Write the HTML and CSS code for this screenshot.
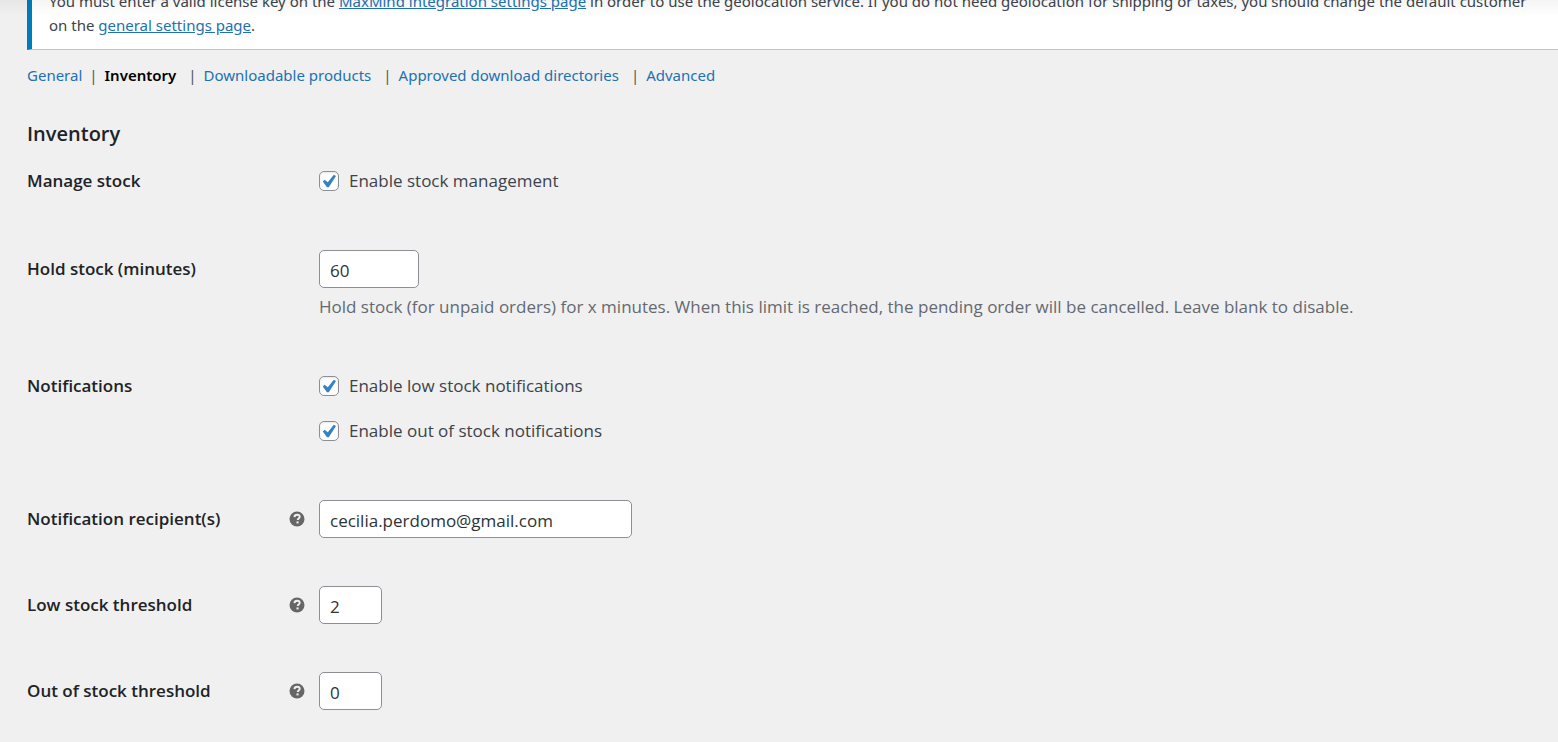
FILE: index.html
```html
<!DOCTYPE html>
<html lang="en">
<head>
<meta charset="utf-8">
<title>Inventory settings</title>
<link rel="stylesheet" href="styles.css">
</head>
<body>
<svg class="sprite" aria-hidden="true">
  <symbol id="help" viewBox="0 0 16 16">
    <circle cx="8" cy="8" r="7.5" fill="#666"/>
    <path d="M5.4 6.1C5.5 4.5 6.5 3.7 8.1 3.7c1.6 0 2.6.8 2.6 2.1 0 1.6-2 1.7-2 3.2" fill="none" stroke="#f0f0f0" stroke-width="1.9"/>
    <rect x="7.5" y="10.4" width="2.1" height="2" fill="#f0f0f0"/>
  </symbol>
</svg>
<div class="top-shade"></div>
<main class="page">
  <div class="notice">
    <p>You must enter a valid license key on the <a href="#">MaxMind integration settings page</a> in order to use the geolocation service. If you do not need geolocation for shipping or taxes, you should change the default customer<br>on the <a href="#">general settings page</a>.</p>
  </div>
  <nav class="sections">
    <a href="#">General</a><span class="bar">|</span><a href="#" class="current">Inventory</a><span class="bar wide">|</span><a href="#">Downloadable products</a><span class="bar wide">|</span><a href="#">Approved download directories</a><span class="bar wide">|</span><a href="#">Advanced</a>
  </nav>
  <h2 class="title">Inventory</h2>
  <form class="settings">
    <div class="row roomy">
      <div class="name">Manage stock</div>
      <div class="field"><label class="option"><input type="checkbox" class="tick" checked>Enable stock management</label></div>
    </div>
    <div class="row">
      <label class="name" for="hold">Hold stock (minutes)</label>
      <div class="field"><input id="hold" class="box medium" type="text" value="60"><p class="description">Hold stock (for unpaid orders) for x minutes. When this limit is reached, the pending order will be cancelled. Leave blank to disable.</p></div>
    </div>
    <div class="row roomy">
      <div class="name">Notifications</div>
      <div class="field options"><label class="option"><input type="checkbox" class="tick" checked>Enable low stock notifications</label><label class="option"><input type="checkbox" class="tick" checked>Enable out of stock notifications</label></div>
    </div>
    <div class="row">
      <label class="name" for="recipient">Notification recipient(s)<svg class="help"><use href="#help"/></svg></label>
      <div class="field"><input id="recipient" class="box long" type="text" value="cecilia.perdomo@gmail.com"></div>
    </div>
    <div class="row">
      <label class="name" for="low">Low stock threshold<svg class="help"><use href="#help"/></svg></label>
      <div class="field"><input id="low" class="box short" type="text" value="2"></div>
    </div>
    <div class="row">
      <label class="name" for="out">Out of stock threshold<svg class="help"><use href="#help"/></svg></label>
      <div class="field"><input id="out" class="box short" type="text" value="0"></div>
    </div>
  </form>
</main>
</body>
</html>
```
FILE: styles.css
```css
* { box-sizing: border-box; }
html { overflow: hidden; }
body {
  margin: 0;
  background: #f0f0f0;
  color: #3c434a;
  font: 17px/24px "Open Sans", "Noto Sans", sans-serif;
}
.sprite { display: none; }
.top-shade {
  position: absolute;
  top: 0;
  left: 0;
  right: 0;
  height: 16px;
  background: linear-gradient(rgba(0, 0, 0, .04), rgba(0, 0, 0, 0));
}
.page { padding-left: 27px; }
a { color: #2271b1; }
.notice {
  margin-top: -24px;
  padding: 12px 0 12px 17px;
  background: #fff;
  border: solid #c3c4c7;
  border-width: 1px 0 1px 5px;
  border-left-color: #007cba;
  font-family: "Noto Sans", sans-serif;
  font-size: 15px;
  white-space: nowrap;
}
.notice p { margin: 0; }
.sections {
  display: flex;
  margin-top: 13px;
  font-family: "Noto Sans", sans-serif;
  font-size: 15px;
}
.sections a { text-decoration: none; }
.sections .current { color: #000; font-weight: 600; }
.bar { margin: 0 7px; color: #50575e; }
.bar.wide { margin-left: 12px; }
.title {
  margin: 35px 0 0;
  color: #1d2327;
  font-size: 20px;
  font-weight: 600;
  line-height: 24px;
}
.settings { margin-top: -8px; }
.row {
  display: grid;
  grid-template-columns: 292px 1fr;
  padding: 24px 0;
}
.row.roomy { padding-bottom: 26px; }
.name {
  display: flex;
  justify-content: space-between;
  align-items: center;
  height: 38px;
  padding-right: 14px;
  color: #1d2327;
  font-weight: 600;
}
.help { width: 16px; height: 16px; }
.option { display: flex; align-items: center; height: 38px; }
.options { display: grid; gap: 7px; }
.tick {
  appearance: none;
  width: 20px;
  height: 20px;
  margin: 0 10px 0 0;
  border: 1px solid #8c8f94;
  border-radius: 5px;
  background: #fff url("data:image/svg+xml,%3Csvg xmlns='http://www.w3.org/2000/svg' viewBox='0 0 20 20'%3E%3Cpath d='M14.8 3.8l2.2 1.3-7.2 11.1H7.9L3.8 10.5l1.8-1.8 3.2 2.6z' fill='%233582c4'/%3E%3C/svg%3E") center / 20px;
  box-shadow: inset 0 1px 2px rgba(0, 0, 0, .1);
}
.box {
  display: block;
  height: 38px;
  padding: 2px 10px 0;
  border: 1px solid #8c8f94;
  border-radius: 5px;
  background: #fff;
  color: #2c3338;
  font: inherit;
}
.short { width: 63px; }
.medium { width: 100px; }
.long { width: 313px; }
.description { margin: 7px 0 0; color: #646970; }
```
